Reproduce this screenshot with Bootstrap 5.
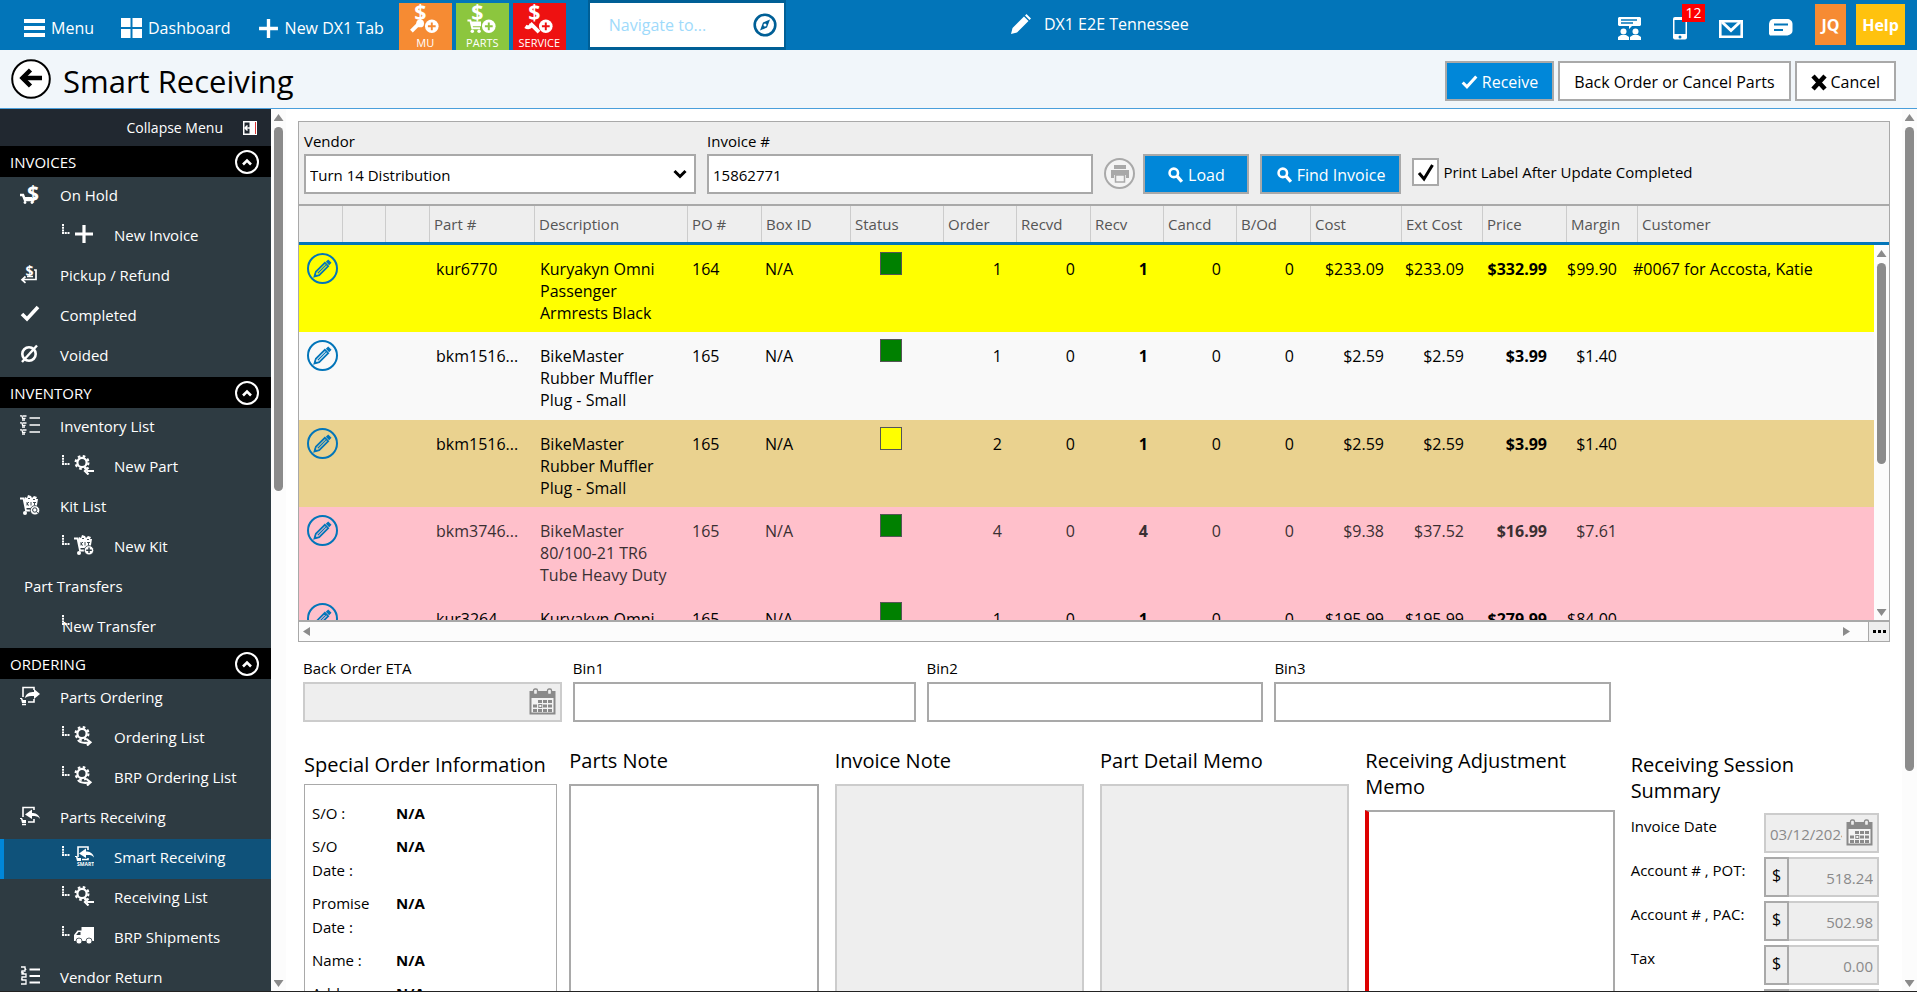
<!DOCTYPE html>
<html lang="en">
<head>
<meta charset="utf-8">
<meta name="viewport" content="width=device-width, initial-scale=1">
<title>Smart Receiving</title>
<link href="https://cdn.jsdelivr.net/npm/bootstrap@5.3.0/dist/css/bootstrap.min.css" rel="stylesheet">
<style>
  body { font-family: "Open Sans", "Noto Sans", sans-serif; font-size: 15px; line-height: 24px; color: #000; background: #fff; border-bottom: 1px solid #222; }
  a { color: inherit; text-decoration: none; }
  svg { display: block; flex: none; }
  .ico { width: 20px; height: 20px; }
  button { color: inherit; }

  /* top bar */
  .topbar { height: 50px; flex: none; background: #0275b9; color: #fff; }
  .topbar .side-a { flex: 1006 1 0; min-width: 0; }
  .topbar .side-b { flex: 730 1 0; min-width: 0; }
  .nav-item-dx { font-size: 16px; gap: 6px; height: 50px; padding-top: 6px; white-space: nowrap; margin-right: 27px; }
  .nav-item-dx:nth-child(3) { margin-right: 15px; }
  .site { gap: 13px; font-size: 16px; padding-bottom: 2px; white-space: nowrap; }
  .tile { width: 53px; height: 47px; margin: 3px 4px 0 0; font-size: 11px; line-height: 13px; border: 0; padding: 0; color: #fff; }
  .tile svg { width: 30px; height: 33px; }
  .tile-mu { background: #f68b33; } .tile-parts { background: #8cc63e; } .tile-service { background: #ee1111; }
  .search-box { width: 198px; height: 50px; border: solid #005f96; border-width: 3px 2px; background: #fff; margin-left: 18px; }
  .search-box input { border: 0; outline: 0; width: 100%; padding: 0 0 0 19px; color: #005f96; font-size: 16px; background: transparent; }
  .search-box input::placeholder { color: #9edafb; opacity: 1; }
  .search-box button { border: 0; background: none; padding: 0 7px 0 0; color: #005f96; }
  .icon-btn { border: 0; background: none; padding: 0; color: #fff; margin-top: 16px; position: relative; }
  .count { position: absolute; left: 10px; top: -12px; width: 23px; height: 18px; line-height: 18px; font-size: 14px; background: red; }
  .sq { margin-top: 4px; height: 41px; border: 0; color: #fff; font-weight: 700; font-size: 16px; padding: 0; }
  .sq-user { width: 31px; background: #f68b33; } .sq-help { width: 49px; background: #ffc20e; }

  /* title bar */
  .titlebar { height: 59px; flex: none; background: #f1f6fa; border-bottom: 1px solid #4a9fdb; padding: 0 21px 0 11px; }
  .titlebar h1 { font-size: 31px; line-height: 40px; font-weight: 400; margin: 3px 0 0 12px; }
  .btn-dx { height: 40px; border: 2px solid #a9a9a9; border-radius: 0; background: #fff; font-size: 16px; line-height: 24px; padding: 2px 14px 0; color: #000; display: flex; align-items: center; gap: 4px; white-space: nowrap; }
  .btn-dx:hover { background: #fff; color: #000; border-color: #a9a9a9; }
  .btn-dx.blue, .btn-dx.blue:hover { background: #0087d9; color: #fff; }
  .btn-dx.wide { padding: 2px 22px 0; margin-left: -3px; }

  /* sidebar */
  .sidebar { width: 271px; background: #2e3b42; color: #fff; flex: none; overflow: hidden; }
  .collapse-row { height: 37px; background: #212830; padding: 0 14px; gap: 20px; font-size: 14px; border: 0; width: 100%; color: #fff; }
  .group-head { height: 31px; background: #000; padding: 0 12px 0 10px; font-size: 15px; }
  .group-head button { width: 24px; height: 24px; border: 2px solid #fff; border-radius: 50%; background: none; color: #fff; padding: 0; display: grid; place-items: center; }
  .side-link { display: flex; height: 40px; padding: 7px 0 0 20px; align-items: flex-start; }
  .side-link span { line-height: 22px; margin-left: 20px; }
  .side-link.sub { padding-left: 62px; }
  .side-link.sub .tree { width: 8px; height: 10px; margin-right: 4px; }
  .side-link.bare span { margin-left: 4px; }
  .side-link.sub.bare span { margin-left: -12px; }
  .side-link.current { background: #0f527a; border-left: 4px solid #0087d9; padding-left: 58px; }

  /* scroll bars */
  .vbar { width: 15px; flex: none; background: #fcfcfc; display: flex; flex-direction: column; align-items: center; padding: 5px 0 4px; }
  .vbar .track { flex: 1; padding: 6px 0; }
  .vbar .thumb { width: 9px; border-radius: 5px; background: #8b8b8b; }
  .arr { width: 10px; height: 7px; background: #8b8b8b; }
  .arr.up { clip-path: polygon(50% 0, 100% 100%, 0 100%); }
  .arr.down { clip-path: polygon(0 0, 100% 0, 50% 100%); }
  .arr.lft { width: 7px; height: 9px; clip-path: polygon(0 50%, 100% 0, 100% 100%); }
  .arr.rgt { width: 7px; height: 9px; clip-path: polygon(0 0, 100% 50%, 0 100%); }

  /* receiving grid */
  .content { flex: 1; min-width: 0; padding: 12px 12px 0 12px; overflow: hidden; }
  .panel { border: 1px solid #a9a9a9; background: #eee; }
  .filters { padding: 6px 5px 10px; gap: 11px; }
  .box { height: 40px; border: 2px solid #a9a9a9; border-radius: 0; background-color: #fff; padding: 2px 4px 0; width: 100%; color: #000; font-size: 15px; display: block; appearance: none; outline: 0; min-width: 0; }
  .box.off { border-color: #ccc; background-color: #eee; color: #8a8a8a; }
  select.box { background-image: url("data:image/svg+xml,%3Csvg xmlns='http://www.w3.org/2000/svg' viewBox='0 0 14 10'%3E%3Cpath d='M1.500 2l5.500 5.500 5.500-5.500' fill='none' stroke='%23000' stroke-width='3'/%3E%3C/svg%3E"); background-repeat: no-repeat; background-position: right 7px center; background-size: 14px 10px; }
  .vendor { flex: 391; } .invoice { flex: 385; } .rest { flex: 180; }
  .round { width: 31px; height: 31px; border-radius: 50%; border: 2px solid #a9a9a9; background: #f4f4f4; color: #a9a9a9; display: grid; place-items: center; padding: 0; margin-bottom: 5px; }
  .check { appearance: none; width: 27px; height: 28px; border: 2px solid #a9a9a9; background: #fff center/20px no-repeat; margin: 0; }
  .check:checked { background-image: url("data:image/svg+xml,%3Csvg xmlns='http://www.w3.org/2000/svg' viewBox='0 0 20 20'%3E%3Cpath d='M3 11l5 6L16.500 3' fill='none' stroke='%23000' stroke-width='3'/%3E%3C/svg%3E"); }
  .grid-head { border-top: 2px solid #a9a9a9; border-bottom: 3px solid #0275b9; }
  .gtable { table-layout: fixed; width: 100%; border-collapse: separate; border-spacing: 0; }
  .gtable th { height: 36px; font-weight: 400; font-size: 15px; color: #555; padding: 0 0 0 4px; border-left: 1px solid #ccc; white-space: nowrap; }
  .gtable th:first-child { border-left: 0; }
  .grid-body { height: 375px; background: #fff; }
  .grid-body .rows { flex: 1; min-width: 0; overflow: hidden; }
  .gtable td { font-size: 16px; line-height: 22px; vertical-align: top; padding: 13px 0 0 5px; height: 88px; white-space: nowrap; overflow: hidden; text-overflow: ellipsis; }
  .gtable tr:nth-child(odd) td { height: 87px; }
  .gtable td.desc { white-space: normal; }
  .gtable td.num { text-align: right; padding: 13px 11px 0 0; }
  .gtable td.edit { padding: 8px 0 0 8px; }
  .gtable td.stat { padding: 7px 0 0 32px; }
  .edit a { display: grid; place-items: center; width: 31px; height: 31px; border: 2px solid #0275b9; border-radius: 50%; color: #0275b9; }
  .state { width: 22px; height: 23px; border: 1px solid #555; background: green; }
  .state.part { background: #ff0; }
  .r-yellow { background: #ff0; } .r-white { background: #f9f9f9; } .r-tan { background: #ead28f; } .r-pink { background: #ffc0cb; }
  .r-soft { color: #3a2f32; }
  .hbar { height: 21px; border-top: 2px solid #a9a9a9; background: #fcfcfc; }
  .hbar .track { flex: 1; padding: 0 18px 0 4px; }
  .hbar button { width: 21px; border: 0; border-left: 1px solid #a9a9a9; background: #eee; padding: 0; display: grid; place-items: center; }

  /* fields under the grid */
  .bins { display: grid; grid-template-columns: 259fr 343fr 337fr 337fr 268fr; gap: 11px; padding: 13px 0 0 5px; }
  .bins label, .filters label.top { display: block; line-height: 26px; }
  .date { position: relative; }
  .date .cal { position: absolute; right: 6px; top: 6px; color: #8a8a8a; width: 27px; height: 27px; }
  .bins label { margin-bottom: 1px; }
  .notes { margin: 0; padding-top: 26px; align-items: stretch; height: 400px; flex-wrap: nowrap; }
  .notes > .col-2 { padding: 0 10px 0 6px; display: flex; flex-direction: column; }
  .notes > .col-2:first-child { padding-right: 6px; }
  .notes > .col-2:last-child { padding: 0 11px 0 6px; }
  .notes h2, .notes .head { font-size: 20px; line-height: 26px; font-weight: 400; margin: 0; display: block; white-space: nowrap; }
  .notes .head { margin-bottom: 10px; }
  .notes .low { margin-top: 4px; margin-bottom: 6px; }
  .area { flex: 1; border: 2px solid #a9a9a9; width: 100%; resize: none; outline: 0; display: block; }
  .area.off { border-color: #ccc; background: #eee; }
  .area.must { border-left: 4px solid #d00; }
  .so { flex: 1; border: 1px solid #a9a9a9; padding: 16px 7px 0; margin: 0; display: grid; grid-template-columns: 84px 1fr; row-gap: 9px; align-content: start; }
  .so dt { font-weight: 400; padding-right: 12px; } .so dd { font-weight: 700; margin: 0; }
  .sum { display: grid; grid-template-columns: 1fr 115px; row-gap: 4px; padding-top: 3px; }
  .sum label { line-height: 26px; white-space: nowrap; }
  .money { display: flex; }
  .money span { width: 25px; height: 40px; border: 2px solid #a9a9a9; background: #eee; text-align: center; line-height: 32px; font-size: 16px; flex: none; }
  .money .box { border-left: 0; text-align: right; }
</style>
</head>
<body class="vh-100 d-flex flex-column overflow-hidden">

<svg width="0" height="0" class="position-absolute" aria-hidden="true">
  <symbol id="i-tree" viewBox="0 0 8 10"><path d="M1 0v9h7" fill="none" stroke="currentColor" stroke-width="2" stroke-dasharray="2 .7"/></symbol>
  <symbol id="i-plus" viewBox="0 0 20 20"><path d="M10 1v18M1 10h18" stroke="currentColor" stroke-width="3.200"/></symbol>
  <symbol id="i-check" viewBox="0 0 20 20"><path d="M2 10l5 5L18 3" fill="none" stroke="currentColor" stroke-width="3.600"/></symbol>
  <symbol id="i-pencil" viewBox="0 0 20 20"><path d="M0 20l1.500-6L13 2.500l4.500 4.500L6 18.500zM14 1.500L15.500 0 20 4.500 18.500 6z" fill="currentColor"/></symbol>
  <symbol id="i-pencil-o" viewBox="0 0 20 20"><path d="M1.500 18.500L3 13.500 12.500 4 16 7.500 6.500 17z" fill="none" stroke="currentColor" stroke-width="1.800"/><path d="M5 15l8.500-8.500" stroke="currentColor" stroke-width="1.200"/><path d="M13.500 3L16 .5 19.500 4 17 6.500z M1 19l1-4 3 3z" fill="currentColor"/></symbol>
  <symbol id="i-glass" viewBox="0 0 20 20"><circle cx="8" cy="7.500" r="5" fill="none" stroke="currentColor" stroke-width="3"/><path d="M11.500 11l6 7" stroke="currentColor" stroke-width="3.800"/></symbol>
  <symbol id="i-gear" viewBox="0 0 20 20"><circle cx="8" cy="7.500" r="4.600" fill="none" stroke="currentColor" stroke-width="2.200"/><circle cx="8" cy="7.500" r="6.400" fill="none" stroke="currentColor" stroke-width="2.200" stroke-dasharray="2.600 2.426"/></symbol>
  <symbol id="i-gear-in" viewBox="0 0 20 20"><use href="#i-gear"/><path d="M20 16h-7M14.500 12.500L11 16l3.500 3.500" fill="none" stroke="currentColor" stroke-width="2.200"/></symbol>
  <symbol id="i-gear-out" viewBox="0 0 20 20"><use href="#i-gear"/><path d="M4 14c2 3 6 3.200 11 2.500M12.500 13l4 3.200-3.500 3.300" fill="none" stroke="currentColor" stroke-width="2.200"/></symbol>
  <symbol id="i-kit" viewBox="0 0 20 20"><path d="M0 3.500h3.500L6 15.500h8" fill="none" stroke="currentColor" stroke-width="1.800"/><path d="M4 5l1-3 2 1 1-3 3 1 1 2 2-2 3 1-1 2h2l-1.500 9H6z" fill="currentColor"/><path d="M7 7v3.500M7 9L9 7M7 9l2 1.500M11 7v3.500M13 7.500h3M14.500 7.500v3M8 3.500h2M13 4.500h2" stroke="#2e3b42" stroke-width=".9"/><circle cx="5" cy="18" r="2" fill="currentColor"/><circle cx="15" cy="15.300" r="4.700" fill="currentColor" stroke="#2e3b42" stroke-width=".8"/></symbol>
  <symbol id="i-up" viewBox="0 0 12 8"><path d="M2 6.500l4-4 4 4" fill="none" stroke="currentColor" stroke-width="2.600"/></symbol>
  <symbol id="i-cal" viewBox="0 0 27 27"><path d="M1.500 4h24v21.500h-24z" fill="#f4f4f4" stroke="currentColor" stroke-width="2"/><path d="M1 3h25v7H1z" fill="currentColor"/><rect x="4.500" y="1" width="4" height="5.500" rx="1.500" fill="#eee" stroke="currentColor" stroke-width="1.300"/><rect x="18.500" y="1" width="4" height="5.500" rx="1.500" fill="#eee" stroke="currentColor" stroke-width="1.300"/><path d="M9 13.500h14M4 18h5M14 18h9M4 22.500h19" stroke="currentColor" stroke-width="3.200" stroke-dasharray="4 1"/><rect x="9.800" y="16.500" width="3" height="3" fill="none" stroke="currentColor"/></symbol>
</svg>

<header class="topbar d-flex">
  <nav class="side-a d-flex align-items-start ps-4">
    <a href="#" class="nav-item-dx d-flex align-items-center"><svg width="21" height="18" viewBox="0 0 21 18"><path d="M0 2h21M0 9h21M0 16h21" stroke="#fff" stroke-width="3.800"/></svg>Menu</a>
    <a href="#" class="nav-item-dx d-flex align-items-center"><svg width="21" height="20" viewBox="0 0 21 20"><path d="M0 0h9.500v9H0zM11.500 0H21v9h-9.500zM0 11h9.500v9H0zM11.500 11H21v9h-9.500z" fill="#fff"/></svg>Dashboard</a>
    <a href="#" class="nav-item-dx d-flex align-items-center"><svg width="21" height="21"><use href="#i-plus"/></svg>New DX1 Tab</a>
    <button class="tile tile-mu d-flex flex-column align-items-center"><svg viewBox="0 0 30 34"><text x="4" y="18" font-size="22" font-weight="700" fill="#fff">$</text><path d="M1 29l8-8" stroke="#fff" stroke-width="4"/><circle cx="10" cy="21" r="4" fill="#fff"/><circle cx="22" cy="24" r="7" fill="#fff"/><path d="M22 20v8M18 24h8" stroke="#f68b33" stroke-width="2"/></svg>MU</button>
    <button class="tile tile-parts d-flex flex-column align-items-center"><svg viewBox="0 0 30 34"><text x="4" y="18" font-size="22" font-weight="700" fill="#fff">$</text><path d="M0 18h3l2 8h8" fill="none" stroke="#fff" stroke-width="2"/><path d="M3 19h11v5H5z" fill="#fff"/><circle cx="5" cy="29" r="1.800" fill="#fff"/><circle cx="12" cy="29" r="1.800" fill="#fff"/><circle cx="22" cy="24" r="7" fill="#fff"/><path d="M22 20v8M18 24h8" stroke="#8cc63e" stroke-width="2"/></svg>PARTS</button>
    <button class="tile tile-service d-flex flex-column align-items-center"><svg viewBox="0 0 30 34"><text x="4" y="18" font-size="22" font-weight="700" fill="#fff">$</text><path d="M1 24c3 2 6 1 6-3M6 21l9 9" fill="none" stroke="#fff" stroke-width="4"/><circle cx="22" cy="24" r="7" fill="#fff"/><path d="M22 20v8M18 24h8" stroke="#ee1111" stroke-width="2"/></svg>SERVICE</button>
    <form class="search-box d-flex align-items-center"><input type="text" placeholder="Navigate to..." aria-label="Navigate to"><button type="button" aria-label="Go"><svg width="24" height="24" viewBox="0 0 24 24"><circle cx="12" cy="12" r="10.300" fill="none" stroke="currentColor" stroke-width="2.600"/><path d="M17 6.500l-3 8-7 3 3-8z" fill="currentColor"/><circle cx="12" cy="12" r="1.500" fill="#fff"/></svg></button></form>
  </nav>
  <a href="#" class="site d-flex align-items-center"><svg width="20" height="20"><use href="#i-pencil"/></svg>DX1 E2E Tennessee</a>
  <div class="side-b d-flex justify-content-end align-items-start pe-2 me-1">
    <button class="icon-btn" style="margin-right:30px" aria-label="Team chat"><svg width="25" height="25" viewBox="0 0 25 25"><path d="M2 1h21l1 1v7l-1 1H15l-3 3V10H2L1 9V2z" fill="#fff"/><path d="M4 4h16M4 7h12" stroke="#0275b9" stroke-width="1.500"/><circle cx="6.500" cy="15.500" r="3" fill="#fff"/><circle cx="18.500" cy="15.500" r="3" fill="#fff"/><path d="M1 24v-3l3-2h5l3 2v3zM13 24v-3l3-2h5l3 2v3z" fill="#fff"/></svg></button>
    <button class="icon-btn" style="margin-right:31px" aria-label="Phone"><svg width="16" height="25" viewBox="0 0 16 25"><rect x="1" y="1" width="14" height="22.500" rx="2" fill="#fff"/><path d="M2.500 4h11v14h-11z" fill="#0275b9"/><circle cx="8" cy="21" r="1.500" fill="#0275b9"/></svg><span class="count">12</span></button>
    <button class="icon-btn" style="margin-right:26px" aria-label="Mail"><svg width="24" height="25" viewBox="0 0 24 25"><path d="M1.300 5.300h21.400v15.400H1.300z" fill="none" stroke="#fff" stroke-width="2.600"/><path d="M3 6l9 8.500L21 6" fill="none" stroke="#fff" stroke-width="3"/></svg></button>
    <button class="icon-btn" style="margin-right:22px" aria-label="Messages"><svg width="24" height="25" viewBox="0 0 24 25"><path d="M5 3h13c3 0 5.500 2 5.500 5v7c0 2-2 4-5 4.500H1L0 18V9c0-4 2-6 5-6z" fill="#fff"/><path d="M5 8.500h14M5 14h9" stroke="#0275b9" stroke-width="2"/></svg></button>
    <button class="sq sq-user">JQ</button>
    <button class="sq sq-help" style="margin-left:10px">Help</button>
  </div>
</header>

<div class="titlebar d-flex align-items-center">
  <a href="#" aria-label="Back"><svg width="40" height="40" viewBox="0 0 40 40"><circle cx="20" cy="20" r="18.800" fill="#fff" stroke="#000" stroke-width="2"/><path d="M31 19H14" stroke="#000" stroke-width="4.500"/><path d="M19.500 11l-8 8 8 8" fill="none" stroke="#000" stroke-width="4.500"/></svg></a>
  <h1 class="me-auto">Smart Receiving</h1>
  <div class="d-flex gap-1 pt-1">
    <button class="btn btn-dx blue"><svg width="17" height="17"><use href="#i-check"/></svg>Receive</button>
    <button class="btn btn-dx">Back Order or Cancel Parts</button>
    <button class="btn btn-dx"><svg width="16" height="17" viewBox="0 0 16 17"><path d="M2 2l12 13M14 2L2 15" stroke="#000" stroke-width="4.500"/></svg>Cancel</button>
  </div>
</div>

<div class="d-flex flex-fill overflow-hidden">
  <aside class="sidebar">
    <button class="collapse-row d-flex align-items-center justify-content-end">Collapse Menu <svg width="14" height="14" viewBox="0 0 14 14"><rect width="14" height="14" fill="#fff"/><path d="M1.500 1.500h5v11h-5z" fill="#212830"/><path d="M7 7H2M4.500 4.500L2 7l2.500 2.500" stroke="#fff" stroke-width="1.500" fill="none"/><path d="M12.500 1v12" stroke="#d33" stroke-width="1"/></svg></button>
    <div class="group-head d-flex align-items-center justify-content-between">INVOICES<button aria-label="Collapse Invoices"><svg width="12" height="8"><use href="#i-up"/></svg></button></div>
    <a href="#" class="side-link"><svg class="ico" viewBox="0 0 20 20"><text x="7" y="17" font-size="21" font-weight="700" fill="currentColor">$</text><path d="M0 11h3l2 5h8l2-3" fill="none" stroke="currentColor" stroke-width="2.600"/><path d="M3 13h9v3H5z" fill="currentColor"/><circle cx="5" cy="18.500" r="1.400" fill="currentColor"/><circle cx="12" cy="18.500" r="1.400" fill="currentColor"/></svg><span>On Hold</span></a>
    <a href="#" class="side-link sub"><svg class="tree"><use href="#i-tree"/></svg><svg class="ico"><use href="#i-plus"/></svg><span>New Invoice</span></a>
    <a href="#" class="side-link"><svg class="ico" viewBox="0 0 20 20"><text x="5.500" y="11.500" font-size="14" font-weight="700" fill="currentColor">$</text><path d="M14 6h2v9.500H3M5.500 12.500L2 15.700l3.500 3.200M7 12.500h6" fill="none" stroke="currentColor" stroke-width="1.700"/></svg><span>Pickup / Refund</span></a>
    <a href="#" class="side-link"><svg class="ico"><use href="#i-check"/></svg><span>Completed</span></a>
    <a href="#" class="side-link"><svg class="ico" viewBox="0 0 20 20"><circle cx="9" cy="10" r="6.700" fill="none" stroke="currentColor" stroke-width="2.600"/><path d="M2 18L17 1.500" stroke="currentColor" stroke-width="2.400"/></svg><span>Voided</span></a>
    <div class="group-head d-flex align-items-center justify-content-between">INVENTORY<button aria-label="Collapse Inventory"><svg width="12" height="8"><use href="#i-up"/></svg></button></div>
    <a href="#" class="side-link"><svg class="ico" viewBox="0 0 20 20"><path d="M9.500 3H20M9.500 10H20M9.500 17H20" stroke="currentColor" stroke-width="1.600"/><path d="M0 .8h2l.6 2.600h3M0 7.800h2l.6 2.600h3M0 14.800h2l.6 2.600h3M3 1h3.500M3 8h3.500M3 15h3.500M2 5h3M2 12h3M2 19h3" fill="none" stroke="currentColor" stroke-width="1.300"/></svg><span>Inventory List</span></a>
    <a href="#" class="side-link sub"><svg class="tree"><use href="#i-tree"/></svg><svg class="ico"><use href="#i-gear-in"/></svg><span>New Part</span></a>
    <a href="#" class="side-link"><svg class="ico" viewBox="0 0 20 20"><use href="#i-kit"/><circle cx="14.800" cy="15" r="2.200" fill="none" stroke="#2e3b42"/><path d="M16.500 16.700l2 2" stroke="#2e3b42"/></svg><span>Kit List</span></a>
    <a href="#" class="side-link sub"><svg class="tree"><use href="#i-tree"/></svg><svg class="ico" viewBox="0 0 20 20"><use href="#i-kit"/><path d="M15 12.500v5.600M12.200 15.300h5.600" stroke="#2e3b42" stroke-width="1.400"/></svg><span>New Kit</span></a>
    <a href="#" class="side-link bare"><span>Part Transfers</span></a>
    <a href="#" class="side-link sub bare"><svg class="tree"><use href="#i-tree"/></svg><span>New Transfer</span></a>
    <div class="group-head d-flex align-items-center justify-content-between">ORDERING<button aria-label="Collapse Ordering"><svg width="12" height="8"><use href="#i-up"/></svg></button></div>
    <a href="#" class="side-link"><svg class="ico" viewBox="0 0 20 20"><path d="M3 11V1.500h11V4M8 16h6v-3" fill="none" stroke="currentColor" stroke-width="1.600"/><path d="M5 12c1-5 5-6 9-6V3l6 5-6 5v-3c-4 0-6 0-9 2zM0 12h2l1 2h3v3H2l-1-4H0z" fill="currentColor"/><path d="M2 18.500h4" stroke="currentColor" stroke-width="1.500"/></svg><span>Parts Ordering</span></a>
    <a href="#" class="side-link sub"><svg class="tree"><use href="#i-tree"/></svg><svg class="ico"><use href="#i-gear-out"/></svg><span>Ordering List</span></a>
    <a href="#" class="side-link sub"><svg class="tree"><use href="#i-tree"/></svg><svg class="ico"><use href="#i-gear-out"/></svg><span>BRP Ordering List</span></a>
    <a href="#" class="side-link"><svg class="ico" viewBox="0 0 20 20"><path d="M3 11V1.500h11V4M8 16h6v-3" fill="none" stroke="currentColor" stroke-width="1.600"/><path d="M20 13c-1-5-5-6-8-6V3.500L5 8.500l7 4.500v-3c4 0 6 0 8 3zM0 12h2l1 2h3v3H2l-1-4H0z" fill="currentColor"/><path d="M2 18.500h4" stroke="currentColor" stroke-width="1.500"/></svg><span>Parts Receiving</span></a>
    <a href="#" class="side-link sub current"><svg class="tree"><use href="#i-tree"/></svg><svg class="ico" viewBox="0 0 20 20"><path d="M4 11V1h10v3M8 13.500h6V12" fill="none" stroke="currentColor" stroke-width="1.600"/><path d="M20 11.500c-1-5-5-6-8-6V2.500L5 7.500l7 4.500V9c4 0 6 0 8 2.500zM1 10h2l1 2h3v3H3l-1-4H1z" fill="currentColor"/><text x="3" y="19.500" font-size="5" font-weight="700" fill="currentColor">SMART</text></svg><span>Smart Receiving</span></a>
    <a href="#" class="side-link sub"><svg class="tree"><use href="#i-tree"/></svg><svg class="ico"><use href="#i-gear-in"/></svg><span>Receiving List</span></a>
    <a href="#" class="side-link sub"><svg class="tree"><use href="#i-tree"/></svg><svg class="ico" viewBox="0 0 20 20"><path d="M7.500 1H20v14H0V9l3.500-4.500h4z" fill="currentColor"/><path d="M2.200 9l2.300-3h2v3z" fill="#2e3b42"/><circle cx="5" cy="15" r="3" fill="currentColor" stroke="#2e3b42" stroke-width=".8"/><circle cx="15" cy="15" r="3" fill="currentColor" stroke="#2e3b42" stroke-width=".8"/></svg><span>BRP Shipments</span></a>
    <a href="#" class="side-link"><svg class="ico" viewBox="0 0 20 20"><path d="M9.500 3.500H20M9.500 10H20M9.500 16.500H20" stroke="currentColor" stroke-width="1.800"/><path d="M1 1h4v4H2v3h4v3H2v3h4v4H1M5 2l1 2M1 6l3 1M1 13l3 1" fill="none" stroke="currentColor" stroke-width="1.300"/></svg><span>Vendor Return</span></a>
  </aside>
  <div class="vbar"><div class="arr up"></div><div class="track"><div class="thumb" style="height:43%"></div></div><div class="arr down"></div></div>

  <main class="content">
    <section class="panel">
      <div class="filters d-flex align-items-end">
        <div class="vendor"><label class="top" for="vendor">Vendor</label><select id="vendor" class="box"><option>Turn 14 Distribution</option></select></div>
        <div class="invoice"><label class="top" for="inv">Invoice #</label><input id="inv" type="text" class="box" value="15862771"></div>
        <button class="round" aria-label="Print"><svg width="20" height="20" viewBox="0 0 20 20"><path d="M4 1h12v4H4zM1 6h18v8h-3v-3H4v3H1z" fill="currentColor"/><path d="M5.500 11h9v7h-9z" fill="#f4f4f4" stroke="currentColor" stroke-width="1.500"/></svg></button>
        <button class="btn btn-dx blue wide"><svg width="17" height="18"><use href="#i-glass"/></svg>Load</button>
        <button class="btn btn-dx blue"><svg width="17" height="18"><use href="#i-glass"/></svg>Find Invoice</button>
        <div class="d-flex align-items-center gap-1 mb-1 pb-1"><input type="checkbox" class="check" id="lbl" checked><label for="lbl">Print Label After Update Completed</label></div>
        <div class="rest"></div>
      </div>
      <div class="grid-head">
        <table class="gtable">
          <colgroup><col style="width:43px"><col style="width:43px"><col style="width:44px"><col style="width:105px"><col style="width:153px"><col style="width:74px"><col style="width:89px"><col style="width:93px"><col style="width:73px"><col style="width:74px"><col style="width:73px"><col style="width:73px"><col style="width:74px"><col style="width:91px"><col style="width:81px"><col style="width:84px"><col style="width:71px"><col></colgroup>
          <thead><tr><th></th><th></th><th></th><th>Part #</th><th>Description</th><th>PO #</th><th>Box ID</th><th>Status</th><th>Order</th><th>Recvd</th><th>Recv</th><th>Cancd</th><th>B/Od</th><th>Cost</th><th>Ext Cost</th><th>Price</th><th>Margin</th><th>Customer</th></tr></thead>
        </table>
      </div>
      <div class="grid-body d-flex">
        <div class="rows">
          <table class="gtable">
            <colgroup><col style="width:132px"><col style="width:104px"><col style="width:152px"><col style="width:73px"><col style="width:88px"><col style="width:92px"><col style="width:73px"><col style="width:73px"><col style="width:73px"><col style="width:73px"><col style="width:73px"><col style="width:90px"><col style="width:80px"><col style="width:83px"><col style="width:70px"><col></colgroup>
            <tbody>
              <tr class="r-yellow"><td class="edit"><a href="#" aria-label="Edit"><svg width="19" height="19"><use href="#i-pencil-o"/></svg></a></td><td>kur6770</td><td class="desc">Kuryakyn Omni<br>Passenger<br>Armrests Black</td><td>164</td><td>N/A</td><td class="stat"><div class="state"></div></td><td class="num">1</td><td class="num">0</td><td class="num fw-bold">1</td><td class="num">0</td><td class="num">0</td><td class="num">$233.09</td><td class="num">$233.09</td><td class="num fw-bold">$332.99</td><td class="num">$99.90</td><td>#0067 for Accosta, Katie</td></tr>
              <tr class="r-white"><td class="edit"><a href="#" aria-label="Edit"><svg width="19" height="19"><use href="#i-pencil-o"/></svg></a></td><td>bkm1516...</td><td class="desc">BikeMaster<br>Rubber Muffler<br>Plug - Small</td><td>165</td><td>N/A</td><td class="stat"><div class="state"></div></td><td class="num">1</td><td class="num">0</td><td class="num fw-bold">1</td><td class="num">0</td><td class="num">0</td><td class="num">$2.59</td><td class="num">$2.59</td><td class="num fw-bold">$3.99</td><td class="num">$1.40</td><td></td></tr>
              <tr class="r-tan"><td class="edit"><a href="#" aria-label="Edit"><svg width="19" height="19"><use href="#i-pencil-o"/></svg></a></td><td>bkm1516...</td><td class="desc">BikeMaster<br>Rubber Muffler<br>Plug - Small</td><td>165</td><td>N/A</td><td class="stat"><div class="state part"></div></td><td class="num">2</td><td class="num">0</td><td class="num fw-bold">1</td><td class="num">0</td><td class="num">0</td><td class="num">$2.59</td><td class="num">$2.59</td><td class="num fw-bold">$3.99</td><td class="num">$1.40</td><td></td></tr>
              <tr class="r-pink r-soft"><td class="edit"><a href="#" aria-label="Edit"><svg width="19" height="19"><use href="#i-pencil-o"/></svg></a></td><td>bkm3746...</td><td class="desc">BikeMaster<br>80/100-21 TR6<br>Tube Heavy Duty</td><td>165</td><td>N/A</td><td class="stat"><div class="state"></div></td><td class="num">4</td><td class="num">0</td><td class="num fw-bold">4</td><td class="num">0</td><td class="num">0</td><td class="num">$9.38</td><td class="num">$37.52</td><td class="num fw-bold">$16.99</td><td class="num">$7.61</td><td></td></tr>
              <tr class="r-pink"><td class="edit"><a href="#" aria-label="Edit"><svg width="19" height="19"><use href="#i-pencil-o"/></svg></a></td><td>kur3264</td><td class="desc">Kuryakyn Omni</td><td>165</td><td>N/A</td><td class="stat"><div class="state"></div></td><td class="num">1</td><td class="num">0</td><td class="num fw-bold">1</td><td class="num">0</td><td class="num">0</td><td class="num">$195.99</td><td class="num">$195.99</td><td class="num fw-bold">$279.99</td><td class="num">$84.00</td><td></td></tr>
            </tbody>
          </table>
        </div>
        <div class="vbar"><div class="arr up"></div><div class="track"><div class="thumb" style="height:59%"></div></div><div class="arr down"></div></div>
      </div>
      <div class="hbar d-flex">
        <div class="track d-flex align-items-center justify-content-between"><div class="arr lft"></div><div class="arr rgt"></div></div>
        <button aria-label="More"><svg width="13" height="3" viewBox="0 0 13 3"><path d="M0 0h3v3H0zM5 0h3v3H5zM10 0h3v3h-3z"/></svg></button>
      </div>
    </section>

    <section class="bins">
      <div><label for="eta">Back Order ETA</label><div class="date"><input id="eta" type="text" class="box off" disabled><svg class="cal"><use href="#i-cal"/></svg></div></div>
      <div><label for="bin1">Bin1</label><input id="bin1" type="text" class="box"></div>
      <div><label for="bin2">Bin2</label><input id="bin2" type="text" class="box"></div>
      <div><label for="bin3">Bin3</label><input id="bin3" type="text" class="box"></div>
    </section>

    <section class="row notes">
      <div class="col-2"><h2 class="low">Special Order Information</h2>
        <dl class="so"><dt>S/O :</dt><dd>N/A</dd><dt>S/O<br>Date :</dt><dd>N/A</dd><dt>Promise<br>Date :</dt><dd>N/A</dd><dt>Name :</dt><dd>N/A</dd><dt>Address :</dt><dd>N/A</dd></dl>
      </div>
      <div class="col-2"><label class="head" for="n1">Parts Note</label><textarea id="n1" class="area"></textarea></div>
      <div class="col-2"><label class="head" for="n2">Invoice Note</label><textarea id="n2" class="area off" disabled></textarea></div>
      <div class="col-2"><label class="head" for="n3">Part Detail Memo</label><textarea id="n3" class="area off" disabled></textarea></div>
      <div class="col-2"><label class="head" for="n4">Receiving Adjustment<br>Memo</label><textarea id="n4" class="area must"></textarea></div>
      <div class="col-2"><h2 class="low">Receiving Session<br>Summary</h2>
        <div class="sum">
          <label for="s1">Invoice Date</label><div class="date"><input id="s1" type="text" class="box off" style="padding-right:35px" value="03/12/2024" disabled><svg class="cal"><use href="#i-cal"/></svg></div>
          <label for="s2">Account # , POT:</label><div class="money"><span>$</span><input id="s2" type="text" class="box off" value="518.24" disabled></div>
          <label for="s3">Account # , PAC:</label><div class="money"><span>$</span><input id="s3" type="text" class="box off" value="502.98" disabled></div>
          <label for="s4">Tax</label><div class="money"><span>$</span><input id="s4" type="text" class="box off" value="0.00" disabled></div>
          <span></span><div class="money"><span></span><input type="text" class="box off" aria-label="Freight" disabled></div>
        </div>
      </div>
    </section>
  </main>
  <div class="vbar"><div class="arr up"></div><div class="track"><div class="thumb" style="height:76%"></div></div><div class="arr down"></div></div>
</div>
<script src="https://cdn.jsdelivr.net/npm/bootstrap@5.3.0/dist/js/bootstrap.bundle.min.js"></script>
</body>
</html>
